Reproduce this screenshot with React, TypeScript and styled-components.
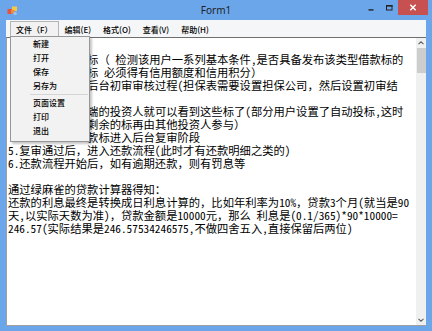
import React from "react";
import styled, { createGlobalStyle } from "styled-components";

const Global = createGlobalStyle`
  html, body { margin: 0; padding: 0; overflow: hidden; background: #ffffff; }
  #root { width: 432px; height: 331px; }
`;

const Frame = styled.div`
  width: 432px;
  height: 331px;
  box-sizing: border-box;
  background: #6ca6ea;
  display: flex;
  flex-direction: column;
`;

const TitleBar = styled.div`
  height: 20px;
  flex: none;
  display: grid;
  grid-template-columns: 1fr auto 1fr;
  align-items: start;
`;

const IconSlot = styled.div`
  padding: 6px 0 0 7px;
  display: flex;
`;

const Title = styled.div`
  font-family: "Noto Sans", "Open Sans", sans-serif;
  font-size: 10px;
  line-height: 21px;
  color: #1e1e1e;
`;

const Controls = styled.div`
  display: flex;
  justify-content: flex-end;
  padding-right: 4px;
`;

const CaptionButton = styled.div<{ $close?: boolean }>`
  width: ${(p) => (p.$close ? "30px" : "18px")};
  height: 15px;
  display: flex;
  background: ${(p) => (p.$close ? "#c75050" : "transparent")};
`;

const Client = styled.div`
  flex: 1;
  min-height: 0;
  margin: 0 6px 5px 6px;
  display: flex;
  flex-direction: column;
`;

const MenuBar = styled.div`
  height: 17px;
  flex: none;
  box-sizing: border-box;
  padding: 1px 0 0 4px;
  background: #f5f6f7;
  display: flex;
  position: relative;
  z-index: 5;
`;

const MenuItem = styled.div<{ $open?: boolean }>`
  position: relative;
  height: 16px;
  box-sizing: border-box;
  padding: 0 5px;
  border: 1px solid ${(p) => (p.$open ? "#b4b4b4" : "transparent")};
  border-bottom: none;
  background: ${(p) => (p.$open ? "#f2f2f2" : "transparent")};
  font-family: "Noto Sans CJK SC", sans-serif;
  font-size: 8px;
  font-weight: 500;
  line-height: 15px;
  color: #000;
  white-space: nowrap;
`;

const DropMenu = styled.div`
  position: absolute;
  left: -1px;
  top: calc(100% - 1px);
  width: 80px;
  box-sizing: border-box;
  border: 1px solid #979797;
  background: #f2f2f2;
  box-shadow: 2px 2px 2px rgba(0, 0, 0, 0.22);
  padding: 0 0 3px;
`;

const DropItem = styled.div`
  height: 14px;
  line-height: 14px;
  padding-left: 22px;
  font-family: "Noto Sans CJK SC", sans-serif;
  font-size: 8px;
  font-weight: 500;
  color: #000;
`;

const Separator = styled.div`
  height: 1px;
  background: #d5d5d5;
  margin: 1px 1px 1px 19px;
`;

const TextBox = styled.div`
  flex: 1;
  min-height: 0;
  display: flex;
  background: #ffffff;
  border: 1px solid #a0a0a0;
  border-top-color: #6e6e6e;
  border-right: none;
`;

const TextContent = styled.div`
  flex: 1;
  min-width: 0;
  padding: 2px 0 0 1px;
  font-family: "Noto Sans Mono CJK SC", "Noto Sans CJK SC", monospace;
  font-size: 11.3px;
  line-height: 13px;
  color: #000;
  white-space: pre;
  overflow: hidden;
`;

const Line = styled.div<{ $indent?: number }>`
  height: 13px;
  padding-left: ${(p) => (p.$indent ? `${p.$indent}em` : "0")};
`;

const ScrollBar = styled.div`
  width: 10px;
  flex: none;
  background: #f0f0f0;
  display: flex;
  flex-direction: column;
  align-items: center;
`;

const Arrow = styled.div`
  height: 10px;
  flex: none;
  display: flex;
  align-items: center;
  justify-content: center;
`;

const Thumb = styled.div`
  width: 9px;
  height: 25px;
  background: #cdcdcd;
`;

const Track = styled.div`
  flex: 1;
`;

/* Lines of the text box; the start of lines 1-7 is hidden behind the open menu. */
const lines: { text: string; indent?: number }[] = [
  { text: "" },
  { text: "标（ 检测该用户一系列基本条件,是否具备发布该类型借款标的", indent: 7 },
  { text: "标 必须得有信用额度和信用积分）", indent: 7 },
  { text: "后台初审审核过程(担保表需要设置担保公司，然后设置初审结", indent: 7 },
  { text: "" },
  { text: "端的投资人就可以看到这些标了(部分用户设置了自动投标,这时", indent: 7 },
  { text: "剩余的标再由其他投资人参与）", indent: 7 },
  { text: "款标进入后台复审阶段", indent: 7 },
  { text: "5.复审通过后，进入还款流程(此时才有还款明细之类的)" },
  { text: "6.还款流程开始后，如有逾期还款，则有罚息等" },
  { text: "" },
  { text: "通过绿麻雀的贷款计算器得知：" },
  { text: "还款的利息最终是转换成日利息计算的，比如年利率为10%，贷款3个月(就当是90" },
  { text: "天,以实际天数为准)，贷款金额是10000元，那么 利息是(0.1/365)*90*10000=" },
  { text: "246.57(实际结果是246.57534246575,不做四舍五入,直接保留后两位)" },
];

const AppIcon = () => (
  <svg width="11" height="10" viewBox="0 0 11 10">
    <rect x="0.5" y="3" width="5" height="5" fill="#e4553f" />
    <rect x="5" y="0.5" width="5" height="4.5" fill="#f6c843" />
    <rect x="4" y="4" width="3.5" height="3.5" fill="#f08a3c" />
    <rect x="6.5" y="6" width="3" height="3" fill="#9cc3ef" />
  </svg>
);

const Chevron = ({ down }: { down?: boolean }) => (
  <svg width="6" height="4" viewBox="0 0 6 4">
    <polyline
      points={down ? "0.5,0.8 3,3.2 5.5,0.8" : "0.5,3.2 3,0.8 5.5,3.2"}
      fill="none"
      stroke="#606060"
      strokeWidth="1.1"
    />
  </svg>
);

export default function App() {
  return (
    <>
      <Global />
      <Frame>
        <TitleBar>
          <IconSlot>
            <AppIcon />
          </IconSlot>
          <Title>Form1</Title>
          <Controls>
            <CaptionButton>
              <svg width="18" height="15" viewBox="0 0 18 15">
                <rect x="6.5" y="9.2" width="5" height="1.4" fill="#222" />
              </svg>
            </CaptionButton>
            <CaptionButton>
              <svg width="18" height="15" viewBox="0 0 18 15">
                <rect x="6.5" y="5.5" width="5.5" height="4.5" fill="none" stroke="#222" strokeWidth="1" />
                <rect x="6" y="5" width="6.5" height="1.6" fill="#222" />
              </svg>
            </CaptionButton>
            <CaptionButton $close>
              <svg width="30" height="15" viewBox="0 0 30 15">
                <path d="M12.3 4.8 L17.7 10.2 M17.7 4.8 L12.3 10.2" stroke="#fff" strokeWidth="1.5" />
              </svg>
            </CaptionButton>
          </Controls>
        </TitleBar>
        <Client>
          <MenuBar>
            <MenuItem $open>
              文件（F）
              <DropMenu>
                <DropItem>新建</DropItem>
                <DropItem>打开</DropItem>
                <DropItem>保存</DropItem>
                <DropItem>另存为</DropItem>
                <Separator />
                <DropItem>页面设置</DropItem>
                <DropItem>打印</DropItem>
                <DropItem>退出</DropItem>
              </DropMenu>
            </MenuItem>
            <MenuItem>编辑(E)</MenuItem>
            <MenuItem>格式(O)</MenuItem>
            <MenuItem>查看(V)</MenuItem>
            <MenuItem>帮助(H)</MenuItem>
          </MenuBar>
          <TextBox>
            <TextContent>
              {lines.map((l, i) => (
                <Line key={i} $indent={l.indent}>
                  {l.text}
                </Line>
              ))}
            </TextContent>
            <ScrollBar>
              <Arrow>
                <Chevron />
              </Arrow>
              <Thumb />
              <Track />
              <Arrow>
                <Chevron down />
              </Arrow>
            </ScrollBar>
          </TextBox>
        </Client>
      </Frame>
    </>
  );
}
